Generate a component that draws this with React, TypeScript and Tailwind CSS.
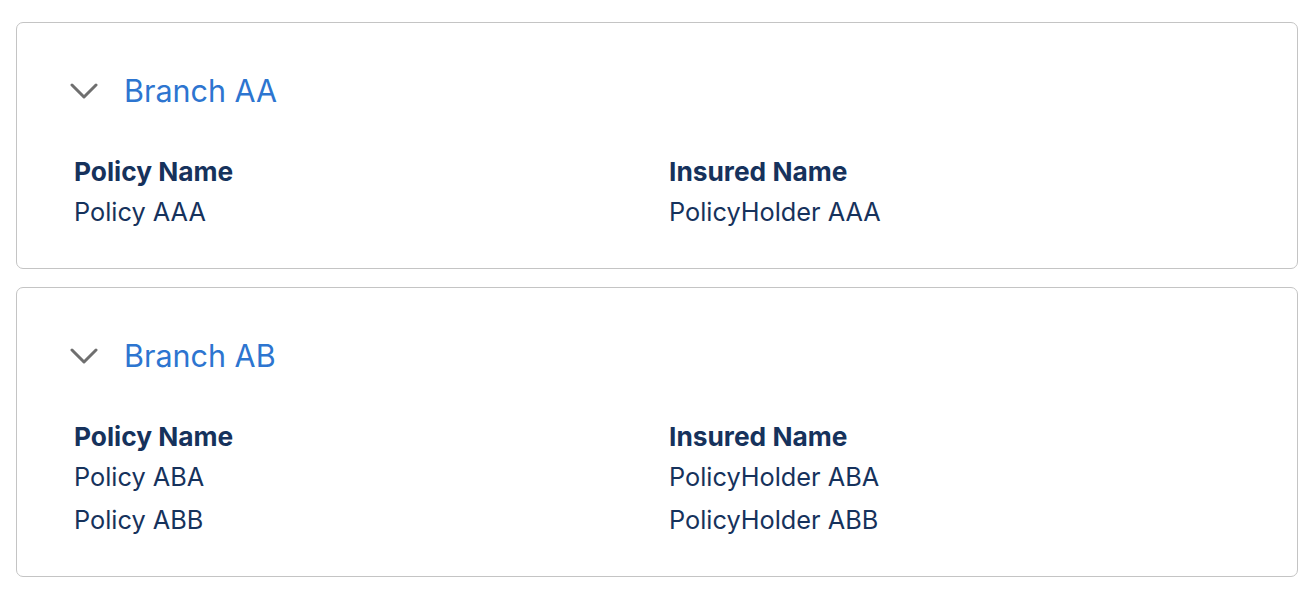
const branches = [
  {
    name: 'Branch AA',
    policies: [{ policy: 'Policy AAA', insured: 'PolicyHolder AAA' }],
  },
  {
    name: 'Branch AB',
    policies: [
      { policy: 'Policy ABA', insured: 'PolicyHolder ABA' },
      { policy: 'Policy ABB', insured: 'PolicyHolder ABB' },
    ],
  },
];

function Chevron() {
  return (
    <svg width="28" height="16" viewBox="0 0 28 16" fill="none" className="shrink-0">
      <polyline
        points="2,2 14,14 26,2"
        stroke="#6f6f6f"
        strokeWidth="3"
        strokeLinecap="round"
        strokeLinejoin="round"
      />
    </svg>
  );
}

function BranchCard({ name, policies }: (typeof branches)[number]) {
  return (
    <section className="rounded-[7px] border border-[#c4c4c4] bg-white pt-[48px] pb-[35px]">
      <div className="flex h-[40px] items-center pl-[53px]">
        <Chevron />
        <span className="ml-[26px] text-[30.5px] leading-[40px] text-[#2d75d0]">{name}</span>
      </div>
      <div className="mt-[43px] grid grid-cols-[595px_1fr] pl-[57px] text-[#16325c]">
        <div className="text-[26.3px] font-bold leading-[36px]">Policy Name</div>
        <div className="text-[26.3px] font-bold leading-[36px]">Insured Name</div>
        {policies.map((p) => (
          <div key={p.policy} className="contents">
            <div className="text-[25.3px] leading-[43px]">{p.policy}</div>
            <div className="text-[25.3px] leading-[43px]">{p.insured}</div>
          </div>
        ))}
      </div>
    </section>
  );
}

export default function App() {
  return (
    <div
      className="min-h-screen bg-white pt-[22px] pl-[16px] pr-[14px]"
      style={{ fontFamily: 'Inter, "Liberation Sans", sans-serif' }}
    >
      <div className="flex flex-col gap-[18px]">
        {branches.map((b) => (
          <BranchCard key={b.name} {...b} />
        ))}
      </div>
    </div>
  );
}
